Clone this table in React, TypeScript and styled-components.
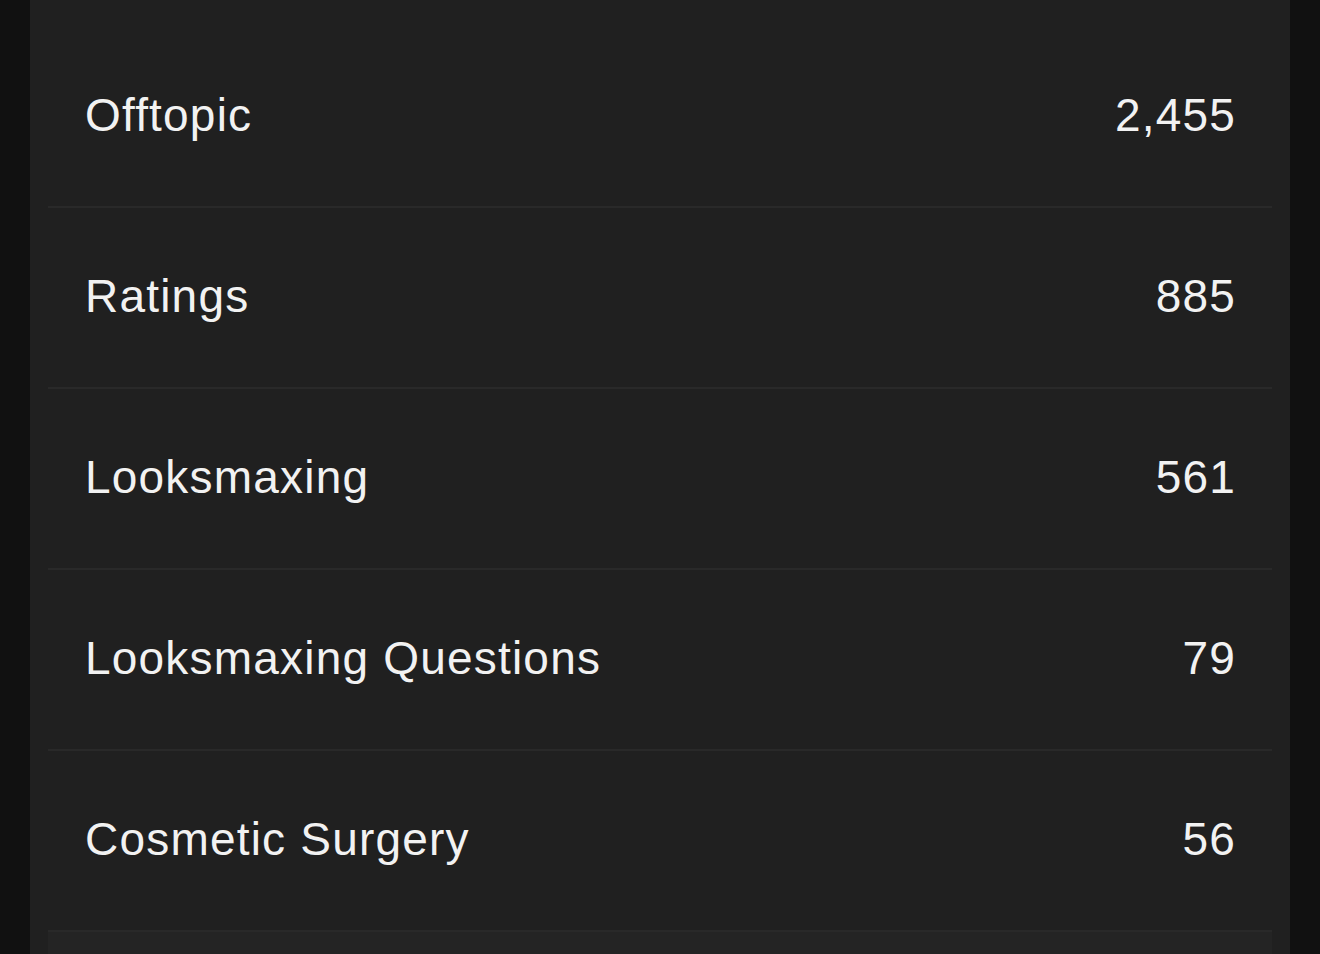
import styled, { createGlobalStyle } from 'styled-components';

const GlobalStyle = createGlobalStyle`
  html, body {
    margin: 0;
    padding: 0;
    background-color: #111111;
  }
  body {
    font-family: 'Liberation Sans', Arial, sans-serif;
    overflow: hidden;
  }
`;

const Page = styled.div`
  height: 954px;
  padding: 0 30px;
  background-color: #111111;
`;

const Panel = styled.div`
  background-color: #202020;
  height: 954px;
  padding: 27px 18px 0;
  box-sizing: border-box;
  overflow: hidden;
`;

const List = styled.div`
  display: flex;
  flex-direction: column;
`;

const Row = styled.div<{ muted?: boolean }>`
  display: flex;
  align-items: center;
  justify-content: space-between;
  height: 181px;
  padding: 0 37px 4px;
  box-sizing: border-box;
  border-bottom: 2px solid #292929;
  background-color: ${(props) => (props.muted ? '#242424' : 'transparent')};
`;

const Label = styled.span`
  color: #f2f2f2;
  font-size: 46px;
  letter-spacing: 1.2px;
`;

const Count = styled.span`
  color: #f2f2f2;
  font-size: 46px;
  letter-spacing: 1.2px;
  margin-right: -1px;
`;

const forums = [
  { name: 'Offtopic', count: '2,455' },
  { name: 'Ratings', count: '885' },
  { name: 'Looksmaxing', count: '561' },
  { name: 'Looksmaxing Questions', count: '79' },
  { name: 'Cosmetic Surgery', count: '56' },
];

const App = () => {
  return (
    <>
      <GlobalStyle />
      <Page>
        <Panel>
          <List>
            {forums.map((f) => (
              <Row key={f.name}>
                <Label>{f.name}</Label>
                <Count>{f.count}</Count>
              </Row>
            ))}
            <Row muted />
          </List>
        </Panel>
      </Page>
    </>
  );
};

export default App;
